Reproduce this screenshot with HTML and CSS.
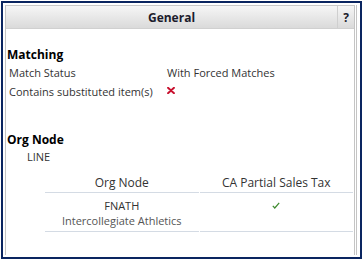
FILE: index.html
```html
<!DOCTYPE html>
<html>
<head>
<meta charset="utf-8">
<link rel="stylesheet" href="styles.css">
</head>
<body>
<div class="frame">
  <div class="outer">
    <div class="panel">
      <div class="header">
        <div class="title">General</div>
        <div class="help">?</div>
      </div>
      <div class="section-title first">Matching</div>
      <div class="row">
        <div class="label">Match Status</div>
        <div class="value">With Forced Matches</div>
      </div>
      <div class="row">
        <div class="label">Contains substituted item(s)</div>
        <div class="value"><svg class="xmark" width="8" height="7" viewBox="0 0 8 7"><path d="M1 0.8 L7 6.2 M7 0.8 L1 6.2" stroke="#c8102e" stroke-width="1.9" stroke-linecap="round"/></svg></div>
      </div>
      <div class="section-title second">Org Node</div>
      <div class="subitem">LINE</div>
      <div class="table">
        <div class="thead">
          <div class="th">Org Node</div>
          <div class="th">CA Partial Sales Tax</div>
        </div>
        <div class="trow">
          <div class="td">
            <div class="code">FNATH</div>
            <div class="desc">Intercollegiate Athletics</div>
          </div>
          <div class="td"><svg class="check" width="8" height="7" viewBox="0 0 8 7"><path d="M0.8 3.8 L2.8 6 L7.2 0.8" fill="none" stroke="#3e8a2e" stroke-width="1.2"/></svg></div>
        </div>
      </div>
    </div>
  </div>
</div>
</body>
</html>
```

FILE: styles.css
```css
html, body {
  margin: 0;
  padding: 0;
  background: #ffffff;
}
body {
  font-family: "Open Sans", "Noto Sans", sans-serif;
  font-size: 11px;
  color: #333333;
}
.frame {
  margin: 1px 3px 0 1px;
  width: 356px;
  height: 252px;
  border: 2px solid #0a2560;
  padding: 2px 0 0 1px;
  box-sizing: content-box;
}
.outer {
  width: 353px;
  height: 250px;
  padding-left: 1px;
  box-sizing: border-box;
  border-right: 1px solid #c4c4c4;
  padding-right: 1px;
}
.panel {
  height: 100%;
  border-left: 1px solid #c4c4c4;
  border-right: 1px solid #c4c4c4;
}
.header {
  display: flex;
  height: 24px;
  box-sizing: border-box;
  border-top: 1px solid #c8c8c8;
  border-bottom: 1px solid #d0d0d0;
  background: linear-gradient(#f6f6f6, #dadada);
}
.title {
  flex: 1;
  text-align: center;
  font-weight: bold;
  font-size: 12px;
  line-height: 23px;
  color: #1c1c2c;
}
.help {
  width: 16px;
  border-left: 1px solid #cfcfcf;
  text-align: center;
  font-weight: bold;
  font-size: 12px;
  line-height: 23px;
  color: #1c1c2c;
}
.section-title {
  font-weight: bold;
  font-size: 12px;
  line-height: 16px;
  color: #000000;
  padding-left: 1px;
}
.section-title.first {
  margin-top: 18px;
}
.section-title.second {
  margin-top: 31px;
}
.row {
  display: flex;
  line-height: 19px;
  padding-left: 3px;
}
.label {
  width: 157px;
}
.value {
  display: flex;
  align-items: center;
  padding-left: 1px;
}
.xmark {
  display: block;
  margin-top: -2px;
}
.subitem {
  padding-left: 21px;
  line-height: 18px;
}
.table {
  margin: 8px 1px 0 39px;
}
.thead {
  display: flex;
  gap: 1px;
  font-size: 12px;
  line-height: 17px;
  color: #333333;
}
.th {
  flex: 1;
  text-align: center;
  padding-bottom: 1px;
  border-bottom: 1px solid #d4dbe4;
}
.trow {
  display: flex;
  gap: 1px;
}
.td {
  flex: 1;
  text-align: center;
  border-bottom: 1px solid #d4dbe4;
  padding: 5px 0 2px;
}
.code {
  line-height: 15px;
  color: #333333;
}
.desc {
  line-height: 16px;
  color: #555555;
}
.check {
  display: block;
  margin: 4px auto 0;
}
```
